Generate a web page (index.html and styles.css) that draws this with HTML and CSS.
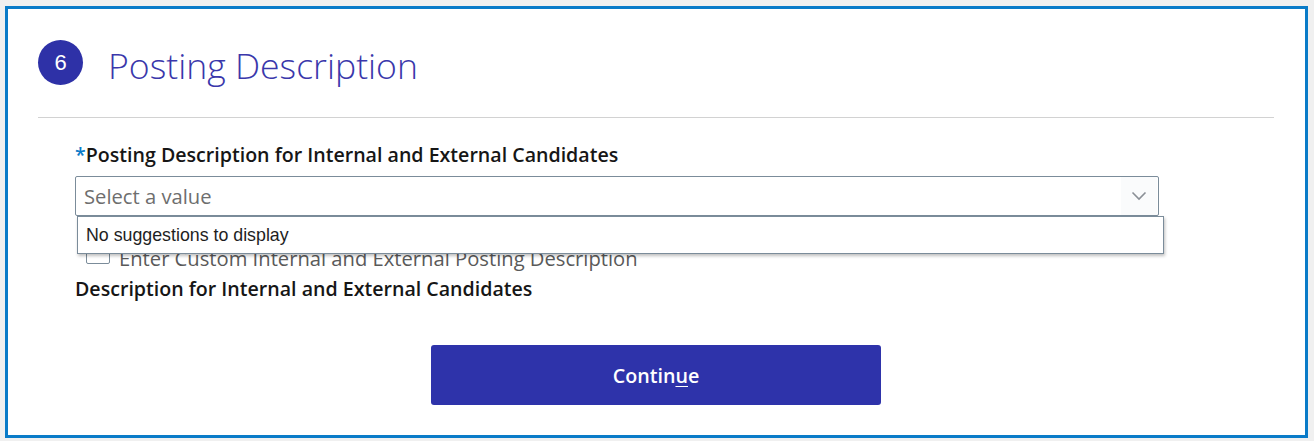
FILE: index.html
```html
<!DOCTYPE html>
<html lang="en">
<head>
<meta charset="utf-8">
<title>Posting Description</title>
<link rel="stylesheet" href="styles.css">
</head>
<body>
<div class="frame">
  <div class="section">
    <div class="header">
      <div class="step">6</div>
      <h1 class="title">Posting Description</h1>
    </div>
    <div class="divider"></div>
    <div class="form">
      <div class="label"><span class="req">*</span>Posting Description for Internal and External Candidates</div>
      <div class="combo">
        <div class="select">
          <span class="placeholder">Select a value</span>
          <span class="chev">
            <svg width="16" height="10" viewBox="0 0 16 10"><path d="M1.5 1.5 L8 8 L14.5 1.5" fill="none" stroke="#8a8f96" stroke-width="1.6"/></svg>
          </span>
        </div>
        <div class="below">
          <div class="check-row">
            <span class="box"></span>
            <span class="check-text">Enter Custom Internal and External Posting Description</span>
          </div>
          <div class="suggest">No suggestions to display</div>
        </div>
      </div>
      <div class="label label2">Description for Internal and External Candidates</div>
    </div>
    <div class="actions">
      <button class="continue">Contin<span class="ak">u</span>e</button>
    </div>
  </div>
</div>
</body>
</html>
```

FILE: styles.css
```css
html, body {
  margin: 0;
  padding: 0;
}
body {
  background: #f0f0f0;
  width: 1314px;
  height: 441px;
  overflow: hidden;
}
.frame {
  box-sizing: border-box;
  margin: 6px 0 0 5px;
  width: 1303px;
  height: 432px;
  border: 3px solid #0a7bc8;
  background: #ffffff;
}
.section {
  padding: 31px 31px 0 30px;
}
.header {
  display: flex;
  align-items: center;
  height: 45px;
}
.step {
  width: 45px;
  height: 45px;
  border-radius: 50%;
  background: #2e31a7;
  color: #fff;
  font-family: "Liberation Sans", Arial, sans-serif;
  font-size: 22px;
  display: flex;
  align-items: center;
  justify-content: center;
}
.title {
  margin: 0 0 0 25px;
  font-family: "Open Sans", sans-serif;
  font-weight: 300;
  font-size: 35.6px;
  color: #3a37ab;
  line-height: 45px;
  position: relative;
  top: 3px;
}
.divider {
  margin-top: 32px;
  height: 1px;
  background: #d2d2d2;
}
.form {
  padding-left: 37px;
  width: 1084px;
}
.label {
  font-family: "Open Sans", sans-serif;
  font-weight: 600;
  font-size: 19.6px;
  color: #161616;
  line-height: 24px;
  margin-top: 25px;
}
.req {
  color: #0a7bc8;
}
.combo {
  margin-top: 9px;
}
.select {
  box-sizing: border-box;
  height: 40px;
  border: 1px solid #7b8c9a;
  border-radius: 2px;
  display: flex;
  align-items: center;
  justify-content: space-between;
}
.placeholder {
  padding-left: 8px;
  font-family: "Open Sans", sans-serif;
  font-size: 20.2px;
  color: #6e6e6e;
}
.chev {
  width: 36px;
  height: 38px;
  background: #fafbfc;
  display: flex;
  align-items: center;
  justify-content: center;
  margin-right: 1px;
}
.below {
  position: relative;
  height: 63px;
}
.check-row {
  display: flex;
  align-items: flex-start;
  padding-top: 32px;
  padding-left: 11px;
}
.box {
  box-sizing: border-box;
  width: 24px;
  height: 18px;
  margin-top: -2px;
  border: 1px solid #7b8c9a;
  border-radius: 2px;
  background: #fff;
}
.check-text {
  margin-left: 9px;
  font-family: "Open Sans", sans-serif;
  font-size: 20.2px;
  color: #5a5a5a;
  line-height: 20px;
}
.suggest {
  position: absolute;
  left: 2px;
  top: 0;
  width: 1087px;
  height: 38px;
  box-sizing: border-box;
  border: 1px solid #7b8c9a;
  background: #fff;
  box-shadow: 1px 2px 3px rgba(0,0,0,0.25);
  padding-left: 8px;
  display: flex;
  align-items: center;
  font-family: "Liberation Sans", Arial, sans-serif;
  font-size: 17.8px;
  color: #1e1e1e;
}
.label2 {
  margin-top: -2px;
}
.actions {
  display: flex;
  justify-content: center;
  margin-top: 44px;
}
.continue {
  width: 450px;
  height: 60px;
  border: none;
  border-radius: 3px;
  background: #2e33aa;
  color: #fff;
  font-family: "Open Sans", sans-serif;
  font-weight: 600;
  font-size: 19.7px;
  cursor: pointer;
}
.ak {
  text-decoration: underline;
  text-underline-offset: 3px;
}
```
